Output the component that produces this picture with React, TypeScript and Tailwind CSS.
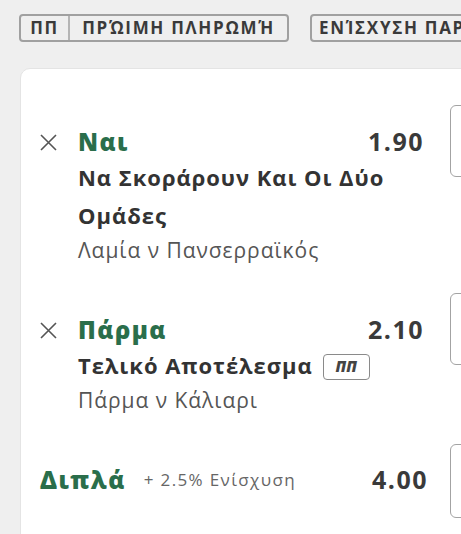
const font = { fontFamily: '"Open Sans", "Noto Sans", sans-serif' }

function Cross() {
  return (
    <svg width="17" height="17" viewBox="0 0 17 17" className="shrink-0">
      <path d="M1 1 L16 16 M16 1 L1 16" stroke="#555" strokeWidth="1.6" fill="none" />
    </svg>
  )
}

function OddsBox() {
  return (
    <div className="-mt-[19px] ml-[26px] h-[72px] w-[80px] shrink-0 rounded-[6px] border border-[#a3a3a3] bg-white" />
  )
}

type Pick = {
  pick: string
  market: string
  event: string
  odds: string
  pp?: boolean
}

const picks: Pick[] = [
  { pick: 'Ναι', market: 'Να Σκοράρουν Και Οι Δύο Ομάδες', event: 'Λαμία ν Πανσερραϊκός', odds: '1.90' },
  { pick: 'Πάρμα', market: 'Τελικό Αποτέλεσμα', event: 'Πάρμα ν Κάλιαρι', odds: '2.10', pp: true },
]

function PickRow({ p }: { p: Pick }) {
  return (
    <div className="flex items-start">
      <div className="w-[384px] shrink-0">
        <div className="flex h-[36px] items-center">
          <div className="w-[38px]">
            <Cross />
          </div>
          <span className="text-[24px] font-extrabold tracking-[0.06em] text-[#2a6e4b]">{p.pick}</span>
          <span className="ml-auto text-[25px] font-bold tracking-[0.06em] text-[#3a3a3a]">{p.odds}</span>
        </div>
        <div className="pl-[38px] tracking-[0.06em]">
          <p className="-mt-[2px] text-[22px] leading-[38px] font-bold text-[#333]">
            {p.market}
            {p.pp && (
              <span className="ml-[10px] inline-flex h-[26px] w-[47px] items-center justify-center rounded-[4px] border border-[#8a8a8a] align-[2px] text-[15px] leading-none font-extrabold italic tracking-normal text-[#444]">
                ΠΠ
              </span>
            )}
          </p>
          <p className="mt-[2px] text-[21px] leading-[28px] text-[#555]">{p.event}</p>
        </div>
      </div>
      <OddsBox />
    </div>
  )
}

export default function App() {
  return (
    <div style={font} className="h-[534px] w-[461px] overflow-hidden bg-[#efefef]">
      <div className="flex gap-[21px] pt-[14px] pl-[19px] whitespace-nowrap">
        <div className="flex h-[28px] w-[270px] shrink-0 items-stretch rounded-[4px] border-2 border-[#a0a0a0] text-[17px] font-bold tracking-[0.1em] text-[#3a3a3a]">
          <span className="flex w-[47px] items-center justify-center">ΠΠ</span>
          <span className="w-[2px] bg-[#b5b5b5]" />
          <span className="flex flex-1 items-center justify-center">ΠΡΏΙΜΗ ΠΛΗΡΩΜΉ</span>
        </div>
        <div className="flex h-[28px] items-center rounded-[4px] border-2 border-[#a0a0a0] px-[7px] text-[17px] font-bold tracking-[0.1em] text-[#3a3a3a]">
          ΕΝΊΣΧΥΣΗ ΠΑΡΟΛΙ
        </div>
      </div>

      <div className="mt-[26px] ml-[20px] w-[560px] rounded-tl-[10px] border border-[#e4e4e4] bg-white pt-[55px] pl-[19px] pb-[40px]">
        <div className="flex flex-col gap-[48px]">
          {picks.map((p) => (
            <PickRow key={p.pick} p={p} />
          ))}
          <div className="flex items-start">
            <div className="flex h-[36px] w-[388px] shrink-0 items-center">
              <span className="text-[24px] font-extrabold tracking-[0.06em] text-[#2a6e4b]">Διπλά</span>
              <span className="ml-[18px] text-[17px] tracking-[0.08em] text-[#666]">+ 2.5% Ενίσχυση</span>
              <span className="ml-auto text-[25px] font-bold tracking-[0.06em] text-[#3a3a3a]">4.00</span>
            </div>
            <div className="-mt-[18px] ml-[22px] h-[74px] w-[80px] shrink-0 rounded-[6px] border border-[#a3a3a3] bg-white" />
          </div>
        </div>
      </div>
    </div>
  )
}
